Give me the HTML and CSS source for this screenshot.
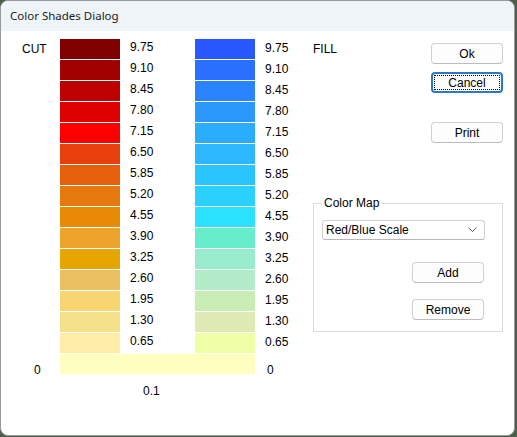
FILE: index.html
```html
<!DOCTYPE html>
<html lang="en">
<head>
    <meta charset="UTF-8">
    <meta name="viewport" content="width=device-width, initial-scale=1.0">
    <title>Color Shades Dialog</title>
    <link rel="stylesheet" href="styles.css">
</head>

<body>
    <div class="window">
        <div class="titlebar">Color Shades Dialog</div>

        <div class="dialog-body">
            <div class="chart-area">
                <div class="chart" id="chart"></div>
                <div class="base-value">0.1</div>
            </div>

            <div class="side">
                <div class="side-top">
                    <div class="fill-label">FILL</div>
                    <div class="buttons">
                        <button class="btn">Ok</button>
                        <button class="btn focused">Cancel</button>
                        <button class="btn print">Print</button>
                    </div>
                </div>

                <fieldset class="group">
                    <legend>Color Map</legend>
                    <div class="combo">
                        <span>Red/Blue Scale</span>
                        <svg class="chevron" width="9" height="6" viewBox="0 0 9 6">
                            <path d="M0.5 0.5 L4.5 4.5 L8.5 0.5" fill="none" stroke="#5f5f5f" stroke-width="1"/>
                        </svg>
                    </div>
                    <button class="btn group-btn add">Add</button>
                    <button class="btn group-btn remove">Remove</button>
                </fieldset>
            </div>
        </div>
    </div>

    <script>
        // value, cut colour, fill colour
        const shades = [
            ['9.75', '#800000', '#2857ff'],
            ['9.10', '#a00000', '#2a6fff'],
            ['8.45', '#bf0000', '#2a84fd'],
            ['7.80', '#df0000', '#2a99fb'],
            ['7.15', '#ff0000', '#2aaefc'],
            ['6.50', '#e8400c', '#2cb7ff'],
            ['5.85', '#e6600c', '#2ac4ff'],
            ['5.20', '#e5790d', '#2ad1ff'],
            ['4.55', '#e88a04', '#2ae1ff'],
            ['3.90', '#eda42c', '#66eecc'],
            ['3.25', '#e6a500', '#98ebcc'],
            ['2.60', '#e9c162', '#b2ebc8'],
            ['1.95', '#f7d672', '#c8ecb4'],
            ['1.30', '#f6e18b', '#dee9b3'],
            ['0.65', '#ffeda7', '#eeffa6']
        ];

        function cell(cls, text) {
            const el = document.createElement('div');
            el.className = cls;
            if (text) el.textContent = text;
            return el;
        }

        function buildChart() {
            const chart = document.getElementById('chart');

            shades.forEach(function (row, i) {
                chart.appendChild(cell('side-label', i === 0 ? 'CUT' : ''));

                const cut = cell('swatch');
                cut.style.background = row[1];
                chart.appendChild(cut);

                chart.appendChild(cell('value', row[0]));

                const fill = cell('swatch');
                fill.style.background = row[2];
                chart.appendChild(fill);

                chart.appendChild(cell('value value-right', row[0]));
            });

            // zero row
            chart.appendChild(cell('zero zero-left', '0'));
            chart.appendChild(cell('swatch zero-bar'));
            chart.appendChild(cell('zero zero-right', '0'));
        }

        buildChart();
    </script>
</body>
</html>
```

FILE: styles.css
```css
body {
    margin: 0;
    width: 517px;
    height: 437px;
    background: #4b5f49;
    font-family: 'Liberation Sans', Arial, sans-serif;
    font-size: 12px;
    color: #000;
    overflow: hidden;
}

.window {
    width: 513px;
    height: 434px;
    background-color: #fff;
    border: 1px solid #9a9a9a;
    border-radius: 8px;
    overflow: hidden;
}

.titlebar {
    height: 30px;
    line-height: 30px;
    padding-left: 9px;
    background-color: #eff4f9;
    font-family: 'Noto Sans', 'Open Sans', sans-serif;
    font-size: 11.5px;
    color: #1b1b1b;
}

.dialog-body {
    display: flex;
}

.chart-area {
    padding-top: 8px;
}

.chart {
    display: grid;
    grid-template-columns: 59px 60px 75px 60px 58px;
    grid-auto-rows: 21px;
}

.swatch {
    height: 20px;
}

.side-label {
    padding: 3px 0 0 21px;
    line-height: 14px;
}

.value {
    padding: 1px 0 0 10px;
    line-height: 14px;
}

.value-right {
    padding-top: 2px;
}

.zero {
    padding-top: 9px;
    line-height: 14px;
}

.zero-left {
    padding-left: 33px;
}

.zero-bar {
    grid-column: 2 / 5;
    background: #feffbf;
}

.zero-right {
    padding-left: 12px;
}

.base-value {
    margin-top: 9px;
    padding-left: 142px;
    line-height: 14px;
}

.side {
    flex: 1;
    padding-right: 11px;
    display: flex;
    flex-direction: column;
}

.side-top {
    display: flex;
    justify-content: space-between;
}

.fill-label {
    padding-top: 11px;
    line-height: 14px;
}

.buttons {
    padding-top: 12px;
    display: flex;
    flex-direction: column;
}

.btn {
    width: 72px;
    height: 21px;
    padding: 0;
    background-color: #fdfdfd;
    border: 1px solid #d0d0d0;
    border-bottom-color: #bcbcbc;
    border-radius: 4px;
    font-family: inherit;
    font-size: 12px;
    color: #000;
}

.btn + .btn {
    margin-top: 8px;
}

.btn.focused {
    border: 2px solid #2a78c8;
    outline: 1px dotted #000;
    outline-offset: -4px;
}

.buttons .print {
    margin-top: 29px;
}

.group {
    margin: 53px 0 0 0;
    padding: 10px 17px 11px 8px;
    border: 1px solid #dcdcdc;
    display: flex;
    flex-direction: column;
    align-items: flex-end;
}

.group legend {
    margin-left: 0;
    padding: 0 2px;
    line-height: 14px;
}

.combo {
    align-self: stretch;
    height: 18px;
    display: flex;
    align-items: center;
    justify-content: space-between;
    padding: 0 7px 0 3px;
    border: 1px solid #d0d0d0;
    border-bottom-color: #b8b8b8;
    border-radius: 3px;
}

.chevron {
    display: block;
}

.group-btn {
    margin-right: 1px;
}

.group .add {
    margin-top: 22px;
}

.group .remove {
    margin-top: 16px;
}
```
